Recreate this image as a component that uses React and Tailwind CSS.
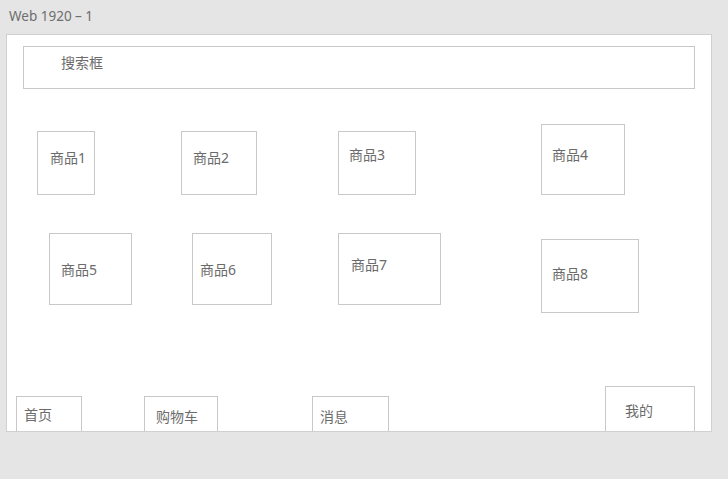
import React from "react";

// wireframe boxes placed on the artboard (x, y relative to artboard)
const boxes = [
  { label: "搜索框", x: 17, y: 12, w: 672, h: 43, px: 37, py: 6 },
  { label: "商品1", x: 31, y: 97, w: 58, h: 64, px: 12, py: 16 },
  { label: "商品2", x: 175, y: 97, w: 76, h: 64, px: 11, py: 16 },
  { label: "商品3", x: 332, y: 97, w: 78, h: 64, px: 10, py: 13 },
  { label: "商品4", x: 535, y: 90, w: 84, h: 71, px: 10, py: 20 },
  { label: "商品5", x: 43, y: 199, w: 83, h: 72, px: 11, py: 26 },
  { label: "商品6", x: 186, y: 199, w: 80, h: 72, px: 7, py: 26 },
  { label: "商品7", x: 332, y: 199, w: 103, h: 72, px: 12, py: 21 },
  { label: "商品8", x: 535, y: 205, w: 98, h: 74, px: 10, py: 24 },
  { label: "首页", x: 10, y: 362, w: 66, h: 40, px: 7, py: 8 },
  { label: "购物车", x: 138, y: 362, w: 74, h: 40, px: 11, py: 10 },
  { label: "消息", x: 306, y: 362, w: 77, h: 40, px: 7, py: 10 },
  { label: "我的", x: 599, y: 352, w: 90, h: 50, px: 19, py: 14 },
];

const App = () => {
  return (
    <div
      className="w-[728px] h-[479px] bg-[#e5e5e5] overflow-hidden"
      style={{ fontFamily: '"Noto Sans", "Noto Sans CJK SC", sans-serif' }}
    >
      {/* artboard title */}
      <div className="h-[34px] pl-[9px] pt-[6px] text-[13.5px] leading-[20px] text-[#6e6e6e]">
        Web 1920 – 1
      </div>

      {/* artboard */}
      <div className="relative ml-[6px] w-[706px] h-[398px] bg-white border border-[#d0d0d0] overflow-hidden">
        {boxes.map((b) => (
          <div
            key={b.label}
            className="absolute border border-[#c8c8c8] bg-white text-[14px] leading-[20px] text-[#6b6b6b] whitespace-nowrap"
            style={{
              left: b.x - 1,
              top: b.y - 1,
              width: b.w,
              height: b.h,
              paddingLeft: b.px,
              paddingTop: b.py,
            }}
          >
            {b.label}
          </div>
        ))}
      </div>
    </div>
  );
};

export default App;
